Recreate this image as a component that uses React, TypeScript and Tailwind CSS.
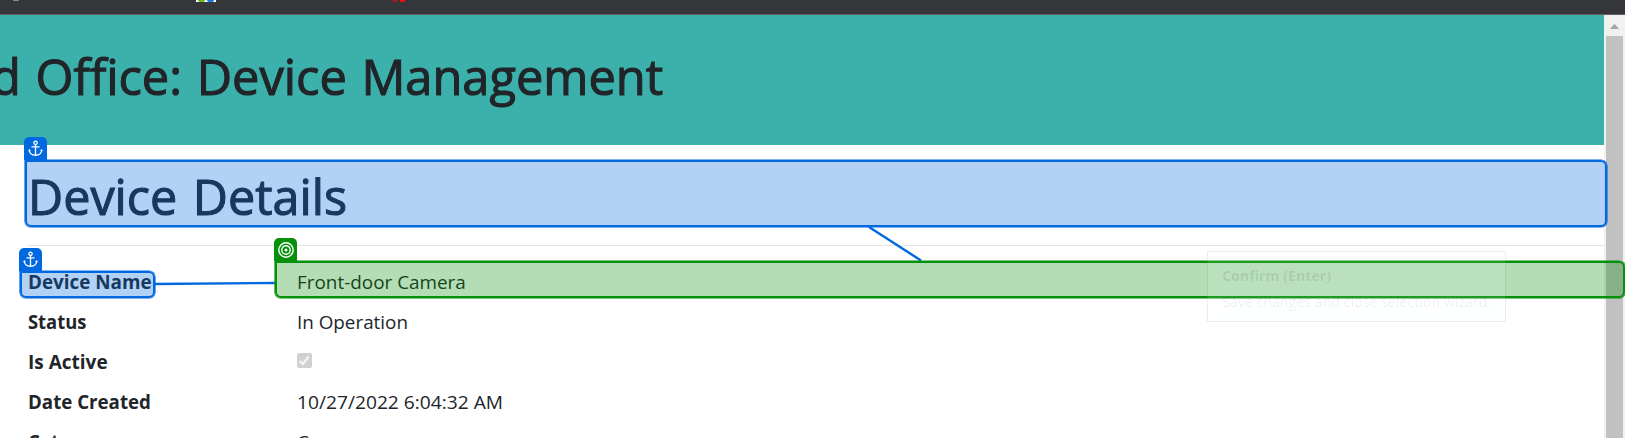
import { useLayoutEffect, useRef, useState } from "react";

type FitProps = { text: string; width: number; className?: string };

/* A single line of text condensed horizontally to a known advance width. */
function Fit({ text, width, className = "" }: FitProps) {
  const ref = useRef<HTMLSpanElement>(null);
  const [scale, setScale] = useState(1);
  useLayoutEffect(() => {
    if (ref.current) setScale(width / ref.current.offsetWidth);
  }, [width, text]);
  return (
    <span
      ref={ref}
      className={`inline-block origin-left whitespace-nowrap ${className}`}
      style={{ transform: `scaleX(${scale})` }}
    >
      {text}
    </span>
  );
}

function AnchorIcon() {
  return (
    <svg width="15" height="17" viewBox="0 0 15 17" fill="none" stroke="white" strokeWidth="1.3">
      <circle cx="7.5" cy="2.8" r="1.7" />
      <path d="M7.5 4.5V15.3M3.4 6.9h8.2M1.2 9.8c.2 3.4 2.8 5.5 6.3 5.5s6.1-2.1 6.3-5.5" />
      <path d="M.8 11.3l.5-1.7 1.4 1M14.2 11.3l-.5-1.7-1.4 1" strokeWidth=".8" />
    </svg>
  );
}

function TargetIcon() {
  return (
    <svg width="16" height="16" viewBox="0 0 16 16" fill="none" stroke="white" strokeWidth="1.4">
      <circle cx="8" cy="8" r="7.2" />
      <circle cx="8" cy="8" r="4.2" />
      <circle cx="8" cy="8" r="1.5" fill="white" stroke="none" />
    </svg>
  );
}

const rows = [
  { label: "Device Name", lw: 124, value: "Front-door Camera", vw: 169 },
  { label: "Status", lw: 58, value: "In Operation", vw: 111 },
  { label: "Is Active", lw: 80, value: null, vw: 0 },
  { label: "Date Created", lw: 123, value: "10/27/2022 6:04:32 AM", vw: 206 },
  { label: "Category", lw: 83, value: "Camera", vw: 68 },
];

export default function App() {
  return (
    <div className="relative flex h-[438px] w-[1625px] flex-col overflow-hidden bg-white font-['Open_Sans','Noto_Sans',sans-serif] text-[#212529]">
      <div className="flex h-[15px] shrink-0 items-start border-b border-[#5f6063] bg-[#35363a]">
        <div className="ml-[13px] h-px w-[6px] bg-[#8a8b8d]" />
        <div className="ml-[177px] flex h-[2px] w-5 justify-center gap-[2px] bg-white">
          <div className="h-[2px] w-[7px] rounded-b-full bg-[#6cb80f]" />
          <div className="h-[2px] w-[7px] rounded-b-full bg-[#1a73e8]" />
        </div>
        <div className="ml-[177px] flex gap-[3px]">
          <div className="h-[2px] w-1 bg-[#c00d1c]" />
          <div className="h-[2px] w-[5px] bg-[#f00a1c]" />
        </div>
      </div>

      <div className="flex min-h-0 flex-1">
        <main className="w-[1604px] shrink-0">
          <header className="flex h-[130px] items-start bg-[#3cb0ab] pt-[26px]">
            <h1 className="-ml-[9px] text-[50px] leading-[70px] font-medium [-webkit-text-stroke:1.1px_#212529]">
              <Fit text="d Office: Device Management" width={672} className="[word-spacing:2px]" />
            </h1>
          </header>
          <section className="pt-4 pl-7">
            <h2 className="h-[84px] text-[50px] leading-[70px] font-medium [-webkit-text-stroke:1.1px_#212529]">
              <Fit text="Device Details" width={319} className="[word-spacing:3px]" />
            </h2>
            <div className="h-px bg-[#e3e3e3]" />
            <dl className="pt-4">
              {rows.map((r) => (
                <div key={r.label} className="flex h-10 items-start text-[19px] leading-[40px]">
                  <dt className="w-[269px] font-bold">
                    <Fit text={r.label} width={r.lw} />
                  </dt>
                  <dd>
                    {r.value ? (
                      <Fit text={r.value} width={r.vw} />
                    ) : (
                      <span className="mt-[11px] flex size-[15px] items-center justify-center rounded-[2px] bg-[#d1d1d1]">
                        <svg width="13" height="13" viewBox="0 0 13 13" fill="none" stroke="#f5f5f5" strokeWidth="2.2">
                          <path d="M1.8 7l3 3 6-7.5" />
                        </svg>
                      </span>
                    )}
                  </dd>
                </div>
              ))}
            </dl>
          </section>
        </main>
        <div className="flex w-[21px] flex-col items-stretch bg-[#f1f1f1] pr-[2px] pl-[2px]">
          <div className="flex h-[21px] items-center justify-center">
            <svg width="9" height="5" viewBox="0 0 9 5" className="mt-[2px]">
              <path d="M0 5L4.5 0 9 5z" fill="#a3a3a3" />
            </svg>
          </div>
          <div className="flex-1 bg-[#c1c1c1]" />
        </div>
      </div>

      <svg className="absolute top-0 left-0" width="1625" height="438" fill="none" stroke="#0069e0" strokeWidth="2.4">
        <path d="M869 227L921 260.5M154 284L275 283" />
      </svg>

      <div className="absolute top-[160px] left-[25px] h-[67px] w-[1582px] rounded-[6px] rounded-tl-none border-2 border-[#0069e0] bg-[#0069e0]/30 shadow-[0_0_0_0.6px_#0069e0]" />
      <div className="absolute top-[137px] left-[24px] flex h-[23px] w-[23px] items-center justify-center rounded-t-[5px] bg-[#0069e0]">
        <AnchorIcon />
      </div>

      <div className="absolute top-[271px] left-[20px] h-[27px] w-[135px] rounded-[6px] rounded-tl-none border-2 border-[#0069e0] bg-[#0069e0]/30 shadow-[0_0_0_0.6px_#0069e0]" />
      <div className="absolute top-[248px] left-[19px] flex h-[23px] w-[23px] items-center justify-center rounded-t-[5px] bg-[#0069e0]">
        <AnchorIcon />
      </div>

      <div className="absolute top-[261px] left-[275px] h-[37px] w-[1350px] rounded-[6px] rounded-tl-none border-2 border-[#05900a] bg-[#05900a]/30 shadow-[0_0_0_0.6px_#05900a]" />
      <div className="absolute top-[238px] left-[274px] flex h-[23px] w-[23px] items-center justify-center rounded-t-[5px] bg-[#05900a]">
        <TargetIcon />
      </div>

      <div className="absolute top-[251px] left-[1207px] flex h-[71px] w-[299px] flex-col border border-black/[0.07] bg-[#f4fffc]/10 pt-[10px] pl-[14px] text-[15px] leading-[26px]">
        <Fit text="Confirm (Enter)" width={109} className="self-start font-bold text-black/[0.09]" />
        <Fit text="Save changes and close selection wizard." width={269} className="self-start text-black/[0.08]" />
      </div>
    </div>
  );
}
